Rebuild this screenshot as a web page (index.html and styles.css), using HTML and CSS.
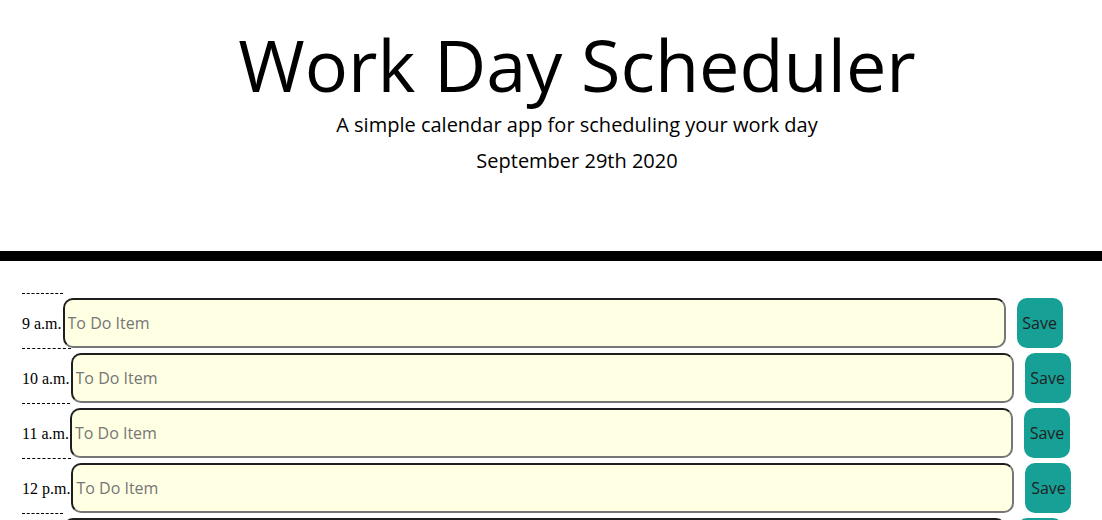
FILE: index.html
```html
<!DOCTYPE html>
<html>
<head>
<meta charset="utf-8">
<title>Work Day Scheduler</title>
<link rel="stylesheet" href="styles.css">
</head>
<body>
<header class="jumbotron">
  <h1 class="title">Work Day Scheduler</h1>
  <p class="lead">A simple calendar app for scheduling your work day</p>
  <p class="lead date">September 29th 2020</p>
</header>
<main class="schedule">
  <div class="row">
    <div class="hour">9 a.m.</div>
    <input class="task" type="text" placeholder="To Do Item">
    <button class="save">Save</button>
  </div>
  <div class="row">
    <div class="hour">10 a.m.</div>
    <input class="task" type="text" placeholder="To Do Item">
    <button class="save">Save</button>
  </div>
  <div class="row">
    <div class="hour">11 a.m.</div>
    <input class="task" type="text" placeholder="To Do Item">
    <button class="save">Save</button>
  </div>
  <div class="row">
    <div class="hour">12 p.m.</div>
    <input class="task" type="text" placeholder="To Do Item">
    <button class="save">Save</button>
  </div>
  <div class="row">
    <div class="hour">1 p.m.</div>
    <input class="task" type="text" placeholder="To Do Item">
    <button class="save">Save</button>
  </div>
</main>
</body>
</html>
```
FILE: styles.css
```css
html, body {
  margin: 0;
  padding: 0;
  background: #ffffff;
}

body {
  font-family: "Open Sans", "Liberation Sans", sans-serif;
  color: #000;
}

.jumbotron {
  text-align: center;
  padding: 24px 0 75px 52px;
  border-bottom: 10px solid #000;
}

.title {
  margin: 0;
  font-size: 72px;
  line-height: 80px;
  font-weight: 400;
}

.lead {
  margin: 6px 0 0 0;
  font-size: 20px;
  line-height: 30px;
  font-weight: 400;
}

.schedule {
  padding: 32px 0 0 22px;
}

.row {
  display: flex;
  align-items: flex-start;
  height: 55px;
}

.hour {
  font-family: "Liberation Serif", "Times New Roman", serif;
  font-size: 16px;
  height: 55px;
  box-sizing: border-box;
  border-top: 1px dashed #000;
  padding: 5px 1px 0 0;
  display: flex;
  align-items: center;
  white-space: nowrap;
}

.task {
  box-sizing: border-box;
  width: 943px;
  height: 50px;
  margin-top: 5px;
  border: 2px solid #555;
  border-top-color: #1e1e1e;
  border-left-color: #1e1e1e;
  border-right-color: #767676;
  border-bottom-color: #767676;
  border-radius: 10px;
  background: #ffffe3;
  font-family: "Open Sans", "Liberation Sans", sans-serif;
  font-size: 16px;
  padding: 0 3px;
  outline: none;
}

.task::placeholder {
  color: #767676;
}

.save {
  box-sizing: border-box;
  width: 46px;
  height: 50px;
  margin: 5px 0 0 11px;
  border: none;
  border-radius: 10px;
  background: #17a096;
  color: #1f1f1f;
  font-family: "Open Sans", "Liberation Sans", sans-serif;
  font-size: 16px;
  padding: 0;
}
```
